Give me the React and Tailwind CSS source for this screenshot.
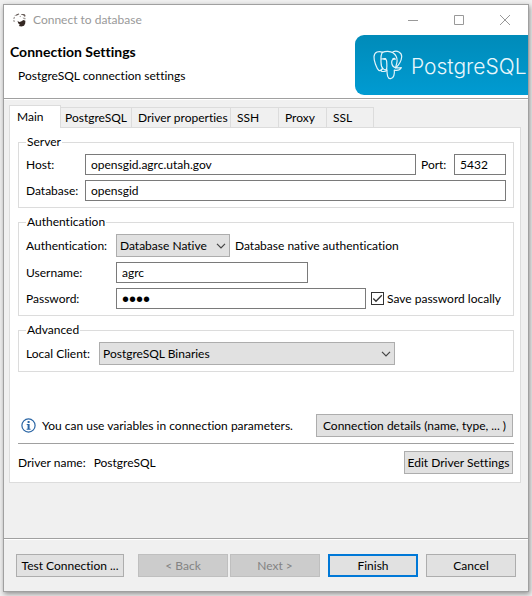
import { useState } from "react";

const input =
  "h-[21px] min-w-0 rounded-none border border-[#7a7a7a] bg-white px-[5px] text-black outline-none";
const button =
  "h-[23px] shrink-0 whitespace-nowrap border border-[#adadad] bg-[#e1e1e1] text-center text-xs leading-[20px] text-black";
const disabledButton =
  "h-[23px] w-[90px] border border-[#bfbfbf] bg-[#cccccc] text-center text-xs leading-[20px] text-[#838383]";

function BeaverIcon() {
  return (
    <svg viewBox="0 0 14 14" className="h-[14px] w-[14px] shrink-0" aria-hidden="true">
      <path d="M1.200 9C.4 6.500 1 3.700 2.500 2.200" fill="none" stroke="#8b8582" strokeWidth="1" strokeDasharray="2 1" />
      <path d="M2.800 1.700 5.600.6 6.300 1.200 4.500 2.200 3 2.700Z" fill="#5b504c" />
      <path d="M8.200 1 11.300 1 12.500 2.200 12.200 3.800 11.200 3.600 10.300 2.200 8.200 1.800Z" fill="#6b605c" />
      <path d="M6.200 3.200 8 2.700 7.600 4.200Z" fill="#a39d9a" />
      <path d="M9.500 4.400 12.700 4.900 12.200 6.400 10.400 5.800Z" fill="#a39d9a" />
      <path d="M4.500 7.800 6.100 8.900 8.100 8.500 10.400 7 12.400 7.700 12.200 10.600 11 12.800 8.400 13.600 5.800 13 6.800 11.700 5.200 10.300Z" fill="#352823" />
    </svg>
  );
}

function Elephant() {
  return (
    <svg viewBox="0 0 30 30" className="h-[30px] w-[30px] shrink-0" fill="none" stroke="#e2f4fa" strokeWidth="1.200" strokeLinecap="round" strokeLinejoin="round" aria-hidden="true">
      <path d="M9.500 2.400C5.800.4 1.300 2.100 1 6.700.8 10.500 3.500 18.600 5.900 20.400 7.100 21.200 8.600 19.600 9.700 18.300" />
      <path d="M9.500 2.400C7.900 4.200 7.800 8 8 11.600 8.100 14.800 8 16.700 9.700 18.300 11.200 19.800 13.200 20.700 13.700 18.500 14.200 15.700 13.700 13.700 13.700 11.500 13.600 9.400 12.600 8.500 8.300 9" />
      <path d="M9.500 2.400C12.300.9 17.200.8 20 2.800 22.300 4.500 24.300 8 24.100 11 23.900 13.600 22.700 15.900 22.800 17.600" />
      <path d="M20 1.800C24 .2 28.900 2.300 28.700 6.800 28.500 10.500 25.900 15.400 22.800 17.600" />
      <path d="M22.300 9.100C18.600 8.500 18.300 11.500 18.900 14 19.500 16.700 22.600 18.600 28.300 17.700 27.100 20 23.600 20.500 21.300 20.100 21.700 24 20.800 28.500 17.700 28.700 14.400 28.900 14.200 25.100 13.800 19.200" />
      <path d="M9.600 18.600 7.800 20.700C9.600 22 12.400 21.600 13.800 20.500" />
      <path d="M11.100 8.900 12.400 8.800M20.200 8.900 21.400 8.700" strokeWidth="1.800" />
    </svg>
  );
}

function Chevron() {
  return (
    <svg viewBox="0 0 10 6" className="pointer-events-none absolute top-[9px] right-[4px] h-[6px] w-[10px]" fill="none" stroke="#444444" strokeWidth="1.200" aria-hidden="true">
      <path d="M1 .8 5 4.800 9 .8" />
    </svg>
  );
}

function Select({ id, className, value }) {
  return (
    <div className={"relative h-[23px] " + className}>
      <select id={id} className="h-full w-full appearance-none rounded-none border border-[#adadad] bg-[#e1e1e1] pr-4 pl-[3px] text-xs text-black outline-none">
        <option>{value}</option>
      </select>
      <Chevron />
    </div>
  );
}

function Group({ title, children }) {
  return (
    <fieldset className="min-w-0 border border-[#dcdcdc] px-[7px] pb-[6px]">
      <legend className="-mb-px h-4 px-px leading-4">{title}</legend>
      {children}
    </fieldset>
  );
}

const tabs = [
  ["PostgreSQL", "w-[71px] pl-[4px]"],
  ["Driver properties", "w-[99px] pl-[6px]"],
  ["SSH", "w-[48px] pl-[6px]"],
  ["Proxy", "w-[48px] pl-[6px]"],
  ["SSL", "w-[47px] pl-[6px]"],
];

export default function App() {
  const [saved, setSaved] = useState(true);
  return (
    <div className="flex min-h-screen flex-col bg-[#f0f0f0] pt-1 pr-[3px] pb-1 pl-[3px] font-[Lato,'Open_Sans',sans-serif] text-xs leading-4 text-black [font-variant-ligatures:none]">
      <main className="flex grow flex-col border border-[#a0a0a0] bg-[#f0f0f0] shadow-[1px_2px_5px_rgba(0,0,0,0.4)]">
        <header className="border-b border-[#a0a0a0] bg-white">
          <div className="flex h-[30px] items-center pl-[9px] text-[#999999]">
            <BeaverIcon />
            <span className="ml-[6px] grow">Connect to database</span>
            <button aria-label="Minimize" className="flex h-full w-[46px] items-center justify-center">
              <svg viewBox="0 0 10 10" className="h-[10px] w-[10px]" stroke="#999999"><path d="M0 5.500H10" /></svg>
            </button>
            <button aria-label="Maximize" className="flex h-full w-[46px] items-center justify-center">
              <svg viewBox="0 0 10 10" className="h-[10px] w-[10px]" fill="none" stroke="#999999"><path d="M.5.5H9.500V9.500H.5Z" /></svg>
            </button>
            <button aria-label="Close" className="flex h-full w-[46px] items-center justify-center">
              <svg viewBox="0 0 10 10" className="h-[10px] w-[10px]" fill="none" stroke="#999999"><path d="M0 0 10 10M10 0 0 10" /></svg>
            </button>
          </div>
          <div className="flex h-[63px] justify-between">
            <div className="pt-[7px] pl-[6px]">
              <h1 className="text-sm leading-5 font-bold">Connection Settings</h1>
              <p className="pt-1 pl-2 leading-5">PostgreSQL connection settings</p>
            </div>
            <div className="flex h-[60px] w-[173px] items-center gap-2 overflow-hidden rounded-l-[9px] bg-linear-to-b from-[#008bb9] to-[#009bd2] pl-[18px] font-[Inter] text-[21px] font-light text-[#e8f7fc]">
              <Elephant />
              <span className="pt-1">PostgreSQL</span>
            </div>
          </div>
        </header>

        <div className="flex grow flex-col border-t border-white px-[5px] pt-[5px]">
          <div role="tablist" className="flex items-end">
            <button role="tab" aria-selected="true" className="z-10 -mb-px h-[23px] w-[52px] border border-b-0 border-[#dcdcdc] bg-white pl-[7px] text-left">Main</button>
            {tabs.map(([name, look]) => (
              <button key={name} role="tab" aria-selected="false" className={"h-5 border-t border-r border-[#dcdcdc] text-left whitespace-nowrap " + look}>{name}</button>
            ))}
          </div>
          <section className="mr-[2px] flex flex-col border border-[#dcdcdc] bg-white pt-[6px] pr-[6px] pb-2 pl-2">
            <Group title="Server">
              <div className="mt-[5px] flex items-center">
                <label htmlFor="host" className="w-[59px] shrink-0">Host:</label>
                <input id="host" defaultValue="opensgid.agrc.utah.gov" className={input + " grow"} />
                <label htmlFor="port" className="w-[38px] shrink-0 pl-[5px]">Port:</label>
                <input id="port" defaultValue="5432" className={input + " w-[52px]"} />
              </div>
              <div className="mt-[5px] flex items-center">
                <label htmlFor="db" className="w-[59px] shrink-0">Database:</label>
                <input id="db" defaultValue="opensgid" className={input + " grow"} />
              </div>
            </Group>
            <div className="h-[6px]" />
            <Group title="Authentication">
              <div className="mt-[5px] flex items-center">
                <label htmlFor="auth" className="w-[90px] shrink-0">Authentication:</label>
                <Select id="auth" className="w-[114px]" value="Database Native" />
                <span className="pl-[5px]">Database native authentication</span>
              </div>
              <div className="mt-[5px] flex items-center">
                <label htmlFor="user" className="w-[90px] shrink-0">Username:</label>
                <input id="user" defaultValue="agrc" className={input + " w-[192px]"} />
              </div>
              <div className="mt-[5px] flex items-center">
                <label htmlFor="pass" className="w-[90px] shrink-0">Password:</label>
                <input id="pass" type="password" defaultValue="agrc" className={input + " grow font-['Liberation_Sans'] text-xl"} />
                <label className="ml-[5px] flex w-[135px] shrink-0 items-center gap-[3px] whitespace-nowrap">
                  <span className="relative h-[13px] w-[13px]">
                    <input type="checkbox" checked={saved} onChange={(e) => setSaved(e.target.checked)} className="block h-[13px] w-[13px] appearance-none border border-[#333333] bg-white" />
                    {saved && (
                      <svg viewBox="0 0 13 13" className="pointer-events-none absolute inset-0 h-[13px] w-[13px]" fill="none" stroke="#333333" strokeWidth="1.300"><path d="M2.300 6.500 5 9.300 10.800 3.300" /></svg>
                    )}
                  </span>
                  Save password locally
                </label>
              </div>
            </Group>
            <div className="h-[6px]" />
            <Group title="Advanced">
              <div className="mt-[5px] flex items-center">
                <label htmlFor="client" className="w-[73px] shrink-0">Local Client:</label>
                <Select id="client" className="w-[296px]" value="PostgreSQL Binaries" />
              </div>
            </Group>
            <div className="mt-[42px] flex items-center">
              <svg viewBox="0 0 15 15" className="ml-[3px] h-[15px] w-[15px] shrink-0" aria-hidden="true">
                <circle cx="7.500" cy="7.500" r="6.600" fill="#ffffff" stroke="#2b66a5" strokeWidth="1.200" />
                <path d="M6.600 3h2v2h-2ZM5.700 6h2.900v4.700h1v1H5.600v-1h1V7h-.9Z" fill="#2b66a5" />
              </svg>
              <span className="grow pl-[6px] whitespace-nowrap">You can use variables in connection parameters.</span>
              <button className={button + " mr-px w-[197px]"}>Connection details (name, type, ... )</button>
            </div>
            <hr className="mt-[6px] border-[#a0a0a0]" />
            <div className="mt-[7px] flex items-center">
              <span>Driver name:</span>
              <span className="grow pl-2">PostgreSQL</span>
              <button className={button + " mr-px w-[109px]"}>Edit Driver Settings</button>
            </div>
          </section>
        </div>

        <footer className="border-t border-[#a0a0a0]">
          <div className="flex justify-between border-t border-white px-3 pt-[14px] pb-[14px]">
            <button className={button + " w-[108px]"}>Test Connection ...</button>
            <div className="flex">
              <button disabled className={disabledButton}>&lt; Back</button>
              <button disabled className={disabledButton + " ml-[2px]"}>Next &gt;</button>
              <button className="ml-2 h-[23px] w-[90px] border-2 border-[#0078d7] bg-[#e1e1e1] text-center text-xs leading-[18px]">Finish</button>
              <button className={button + " ml-2 w-[90px]"}>Cancel</button>
            </div>
          </div>
        </footer>
      </main>
    </div>
  );
}
